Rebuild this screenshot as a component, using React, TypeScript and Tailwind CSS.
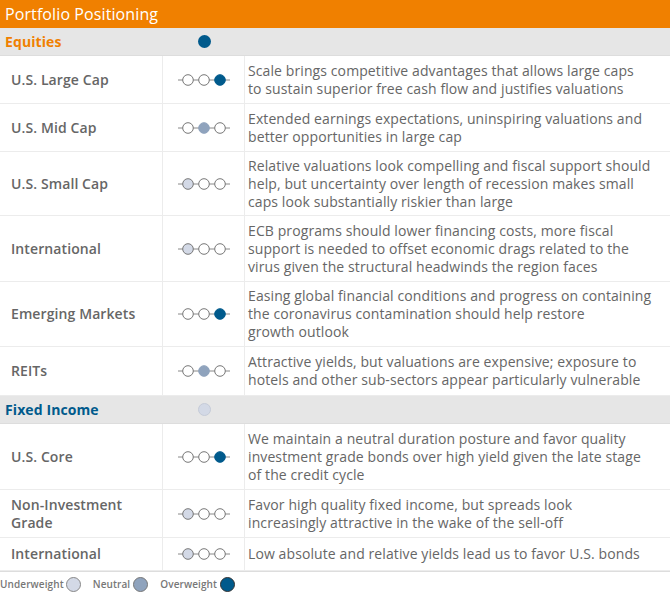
import React from "react";

const DARK = "#005a8c";
const MID = "#8fa3bd";
const LIGHT = "#d3d9e6";

function Dots({ pos }: { pos: number }) {
  const fills = [0, 1, 2].map((i) => (i === pos ? [LIGHT, MID, DARK][pos] : "#fff"));
  return (
    <svg width="54" height="14" viewBox="0 0 54 14">
      <line x1="1" y1="7" x2="53" y2="7" stroke="#888" strokeWidth="1" />
      {fills.map((f, i) => (
        <circle key={i} cx={11 + i * 16} cy="7" r="5.3" fill={f} stroke={i === pos && pos > 0 ? f : "#777"} strokeWidth="1" />
      ))}
    </svg>
  );
}

type Row = { label: string; pos: number; text: React.ReactNode; h: string };
const eq: Row[] = [
  { label: "U.S. Large Cap", pos: 2, h: "h-[48px]", text: <>Scale brings competitive advantages that allows large caps<br />to sustain superior free cash flow and justifies valuations</> },
  { label: "U.S. Mid Cap", pos: 1, h: "h-[48px]", text: <>Extended earnings expectations, uninspiring valuations and<br />better opportunities in large cap</> },
  { label: "U.S. Small Cap", pos: 0, h: "h-[64px]", text: <>Relative valuations look compelling and fiscal support should<br />help, but uncertainty over length of recession makes small<br />caps look substantially riskier than large</> },
  { label: "International", pos: 0, h: "h-[66px]", text: <>ECB programs should lower financing costs, more fiscal<br />support is needed to offset economic drags related to the<br />virus given the structural headwinds the region faces</> },
  { label: "Emerging Markets", pos: 2, h: "h-[65px]", text: <>Easing global financial conditions and progress on containing<br />the coronavirus contamination should help restore<br />growth outlook</> },
  { label: "REITs", pos: 1, h: "h-[49px]", text: <>Attractive yields, but valuations are expensive; exposure to<br />hotels and other sub-sectors appear particularly vulnerable</> },
];
const fi: Row[] = [
  { label: "U.S. Core", pos: 2, h: "h-[66px]", text: <>We maintain a neutral duration posture and favor quality<br />investment grade bonds over high yield given the late stage<br />of the credit cycle</> },
  { label: "Non-Investment Grade", pos: 0, h: "h-[48px]", text: <>Favor high quality fixed income, but spreads look<br />increasingly attractive in the wake of the sell-off</> },
  { label: "International", pos: 0, h: "h-[33px]", text: "Low absolute and relative yields lead us to favor U.S. bonds" },
];

function Section({ title, color, dot }: { title: string; color: string; dot: string }) {
  return (
    <div className="flex h-[28px] items-center bg-[#e6e6e6] border-b border-[#ddd]">
      <div className="w-[163px] pl-[5px] text-[14px] font-bold" style={{ color }}>{title}</div>
      <div className="w-[82px] flex justify-center">
        <div className="w-[13px] h-[13px] rounded-full" style={{ background: dot, border: dot === LIGHT ? "1px solid #c5cbd8" : "none" }} />
      </div>
    </div>
  );
}

function Rows({ rows }: { rows: Row[] }) {
  return (
    <>
      {rows.map((r, i) => (
        <div key={i} className={`flex ${r.h} border-b border-[#ececec]`}>
          <div className="w-[163px] pl-[11px] pr-2 flex items-center text-[14px] font-semibold text-[#666] leading-[18px] border-r border-[#ececec]">{r.label}</div>
          <div className="w-[82px] flex items-center justify-center border-r border-[#ececec]"><Dots pos={r.pos} /></div>
          <div className="flex-1 pl-[3px] pr-0 flex items-center text-[14px] text-[#666] leading-[18px] whitespace-nowrap">{r.text}</div>
        </div>
      ))}
    </>
  );
}

export default function App() {
  return (
    <div className="w-[670px] h-[598px] bg-white overflow-hidden" style={{ fontFamily: "'Open Sans', 'Liberation Sans', sans-serif", letterSpacing: "0.1px" }}>
      <div className="h-[28px] bg-[#f08000] text-white text-[16px] pl-[5px] flex items-center">Portfolio Positioning</div>
      <Section title="Equities" color="#f08000" dot={DARK} />
      <Rows rows={eq} />
      <Section title="Fixed Income" color="#005a8c" dot={LIGHT} />
      <Rows rows={fi} />
      <div className="flex items-center h-[26px] text-[10px] font-semibold text-[#777] border-t border-[#ddd]">
        <span>Underweight</span>
        <span className="ml-[2px] w-[15px] h-[15px] rounded-full bg-[#d3d9e6] border border-[#888]" />
        <span className="ml-[12px]">Neutral</span>
        <span className="ml-[3px] w-[15px] h-[15px] rounded-full bg-[#8fa3bd] border border-[#777]" />
        <span className="ml-[12px]">Overweight</span>
        <span className="ml-[3px] w-[15px] h-[15px] rounded-full bg-[#005a8c] border border-[#333]" />
      </div>
    </div>
  );
}
